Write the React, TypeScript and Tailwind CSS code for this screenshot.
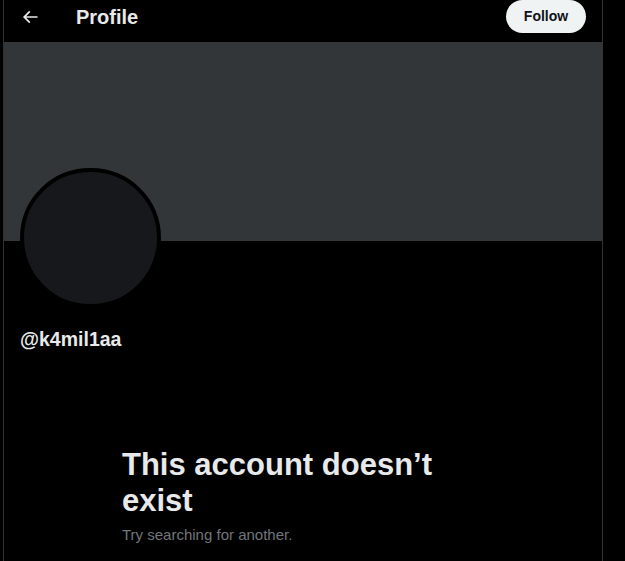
import { useState } from "react";

function BackArrow() {
    return (
        <svg viewBox="0 0 24 24" width="20" height="20" className="fill-[#e7e9ea]">
            <path d="M7.414 13l5.043 5.04-1.414 1.42L3.586 12l7.457-7.46 1.414 1.42L7.414 11H21v2H7.414z" />
        </svg>
    );
}

export default function App() {
    const [handle] = useState("k4mil1aa");

    return (
        <div className="min-h-screen bg-black font-['Liberation_Sans',Arial,sans-serif] text-[#e7e9ea] pl-[3px]">
            <main className="w-[600px] min-h-[561px] border-x border-[#2f3336]">
                {/* header, scrolled up a little */}
                <header className="h-[42px] flex items-start justify-between pl-4 pr-4">
                    <div className="flex items-center h-[33px]">
                        <div className="w-9 flex items-center justify-start mr-[20px]">
                            <BackArrow />
                        </div>
                        <h2 className="text-[20px] leading-6 font-bold">Profile</h2>
                    </div>
                    <button className="h-[33px] w-[80px] rounded-full bg-[#eff3f4] text-[#0f1419] text-[14px] font-bold">
                        Follow
                    </button>
                </header>

                <div className="h-[199px] bg-[#333639]" />

                <div className="px-4">
                    <div className="-mt-[73px] w-[141px] h-[140px] rounded-full border-4 border-black bg-[#16181c]" />
                    <div className="mt-[19px] text-[19.5px] leading-6 font-bold">@{handle}</div>
                </div>

                <div className="w-[362px] mx-auto mt-[96px]">
                    <h1 className="text-[31px] leading-[36px] font-extrabold">This account doesn’t exist</h1>
                    <p className="mt-[6px] text-[15px] leading-5 text-[#71767b]">Try searching for another.</p>
                </div>
            </main>
        </div>
    );
}
